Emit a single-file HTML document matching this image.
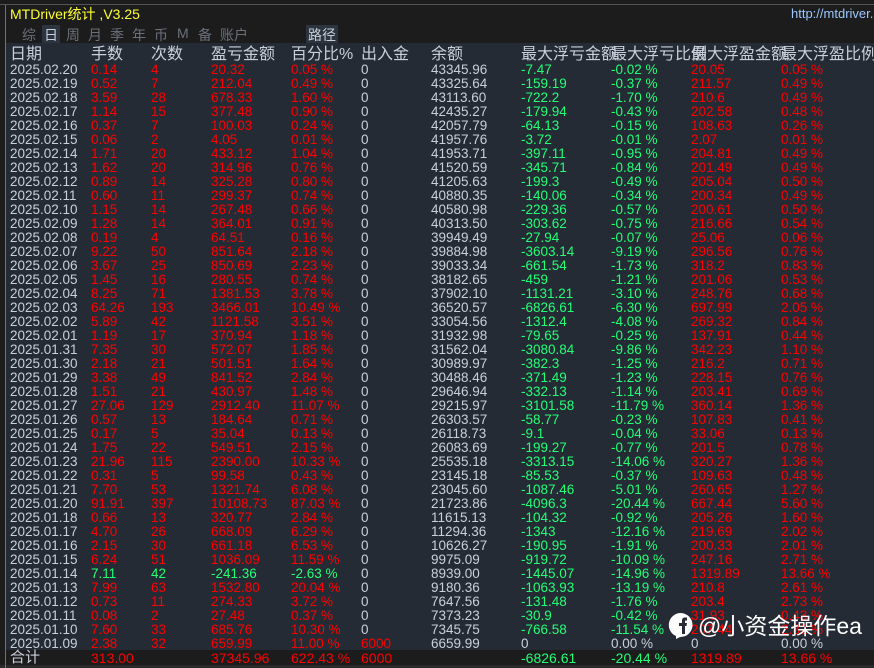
<!DOCTYPE html>
<html><head><meta charset="utf-8"><style>
*{margin:0;padding:0}
body{width:874px;height:668px;background:#1c1c1c;position:relative;overflow:hidden;font-family:"Liberation Sans","Noto Sans CJK SC",sans-serif;}
.ruler{position:absolute;left:0;top:0;width:874px;height:4px;background:#1c1c1c;border-bottom:1px solid #555}
.lb{position:absolute;left:5px;top:5px;width:1px;height:663px;background:#6a7380}
.title{position:absolute;left:10px;top:4px;color:#ffff33;font-size:14px}
.url{position:absolute;left:791px;top:6px;color:#9cc8ff;font-size:13px}
.tabs{position:absolute;left:22px;top:25px;color:#6a707a;font-size:14px}
.tabs span{position:absolute;top:0;white-space:nowrap}
.tabs .on{background:#2c3440;color:#c8d0dc;padding:0 2px;margin-left:-2px}
.lj{position:absolute;left:306px;top:25px;background:#2c3440;color:#c8d0dc;font-size:14px;padding:0 2px}
.tbl{position:absolute;left:6px;top:43px;width:868px;height:607px;background:#252b34}
.r{position:absolute;left:0;height:14px;line-height:14px;font-size:13.5px;color:#c8d0dc;white-space:nowrap;width:868px}
.r span{position:absolute}
.h{font-size:16px;line-height:18px;height:18px}
.s1{left:4px}.s2{left:85px}.s3{left:145px}.s4{left:205px}.s5{left:285px}.s6{left:355px}.s7{left:425px}.s8{left:515px}.s9{left:605px}.s10{left:685px}.s11{left:775px}
.R{color:#ff0000}.G{color:#22ff77}
.tot{position:absolute;left:6px;top:650px;width:868px;height:15px;background:#1c1c1c}
.bot{position:absolute;left:0;top:665px;width:874px;height:3px;background:#2a2a2a}
.wm{position:absolute;left:668px;top:612px;color:#fff;font-size:23px;line-height:28px;display:flex;align-items:center}
</style></head><body>
<div class="ruler"></div>
<div class="title">MTDriver统计 ,V3.25</div>
<div class="url">http://mtdriver.</div>
<div class="tabs"><span style="left:0">综</span><span class="on" style="left:22px">日</span><span style="left:44px">周</span><span style="left:66px">月</span><span style="left:88px">季</span><span style="left:110px">年</span><span style="left:132px">币</span><span style="left:155px">M</span><span style="left:176px">备</span><span style="left:198px">账户</span></div>
<div class="lj">路径</div>
<div class="tbl">
<div class="r h" style="top:3px"><span class="s1">日期</span><span class="s2">手数</span><span class="s3">次数</span><span class="s4">盈亏金额</span><span class="s5">百分比%</span><span class="s6">出入金</span><span class="s7">余额</span><span class="s8">最大浮亏金额</span><span class="s9">最大浮亏比例</span><span class="s10">最大浮盈金额</span><span class="s11">最大浮盈比例</span></div>
<div class="r" style="top:20px"><span class="s1">2025.02.20</span><span class="s2 R">0.14</span><span class="s3 R">4</span><span class="s4 R">20.32</span><span class="s5 R">0.05 %</span><span class="s6">0</span><span class="s7">43345.96</span><span class="s8 G">-7.47</span><span class="s9 G">-0.02 %</span><span class="s10 R">20.05</span><span class="s11 R">0.05 %</span></div>
<div class="r" style="top:34px"><span class="s1">2025.02.19</span><span class="s2 R">0.52</span><span class="s3 R">7</span><span class="s4 R">212.04</span><span class="s5 R">0.49 %</span><span class="s6">0</span><span class="s7">43325.64</span><span class="s8 G">-159.19</span><span class="s9 G">-0.37 %</span><span class="s10 R">211.57</span><span class="s11 R">0.49 %</span></div>
<div class="r" style="top:48px"><span class="s1">2025.02.18</span><span class="s2 R">3.59</span><span class="s3 R">28</span><span class="s4 R">678.33</span><span class="s5 R">1.60 %</span><span class="s6">0</span><span class="s7">43113.60</span><span class="s8 G">-722.2</span><span class="s9 G">-1.70 %</span><span class="s10 R">210.6</span><span class="s11 R">0.49 %</span></div>
<div class="r" style="top:62px"><span class="s1">2025.02.17</span><span class="s2 R">1.14</span><span class="s3 R">15</span><span class="s4 R">377.48</span><span class="s5 R">0.90 %</span><span class="s6">0</span><span class="s7">42435.27</span><span class="s8 G">-179.94</span><span class="s9 G">-0.43 %</span><span class="s10 R">202.58</span><span class="s11 R">0.48 %</span></div>
<div class="r" style="top:76px"><span class="s1">2025.02.16</span><span class="s2 R">0.37</span><span class="s3 R">7</span><span class="s4 R">100.03</span><span class="s5 R">0.24 %</span><span class="s6">0</span><span class="s7">42057.79</span><span class="s8 G">-64.13</span><span class="s9 G">-0.15 %</span><span class="s10 R">108.63</span><span class="s11 R">0.26 %</span></div>
<div class="r" style="top:90px"><span class="s1">2025.02.15</span><span class="s2 R">0.06</span><span class="s3 R">2</span><span class="s4 R">4.05</span><span class="s5 R">0.01 %</span><span class="s6">0</span><span class="s7">41957.76</span><span class="s8 G">-3.72</span><span class="s9 G">-0.01 %</span><span class="s10 R">2.07</span><span class="s11 R">0.01 %</span></div>
<div class="r" style="top:104px"><span class="s1">2025.02.14</span><span class="s2 R">1.71</span><span class="s3 R">20</span><span class="s4 R">433.12</span><span class="s5 R">1.04 %</span><span class="s6">0</span><span class="s7">41953.71</span><span class="s8 G">-397.11</span><span class="s9 G">-0.95 %</span><span class="s10 R">204.81</span><span class="s11 R">0.49 %</span></div>
<div class="r" style="top:118px"><span class="s1">2025.02.13</span><span class="s2 R">1.62</span><span class="s3 R">20</span><span class="s4 R">314.96</span><span class="s5 R">0.76 %</span><span class="s6">0</span><span class="s7">41520.59</span><span class="s8 G">-345.71</span><span class="s9 G">-0.84 %</span><span class="s10 R">201.49</span><span class="s11 R">0.49 %</span></div>
<div class="r" style="top:132px"><span class="s1">2025.02.12</span><span class="s2 R">0.89</span><span class="s3 R">14</span><span class="s4 R">325.28</span><span class="s5 R">0.80 %</span><span class="s6">0</span><span class="s7">41205.63</span><span class="s8 G">-199.3</span><span class="s9 G">-0.49 %</span><span class="s10 R">205.04</span><span class="s11 R">0.50 %</span></div>
<div class="r" style="top:146px"><span class="s1">2025.02.11</span><span class="s2 R">0.60</span><span class="s3 R">11</span><span class="s4 R">299.37</span><span class="s5 R">0.74 %</span><span class="s6">0</span><span class="s7">40880.35</span><span class="s8 G">-140.06</span><span class="s9 G">-0.34 %</span><span class="s10 R">200.34</span><span class="s11 R">0.49 %</span></div>
<div class="r" style="top:160px"><span class="s1">2025.02.10</span><span class="s2 R">1.15</span><span class="s3 R">14</span><span class="s4 R">267.48</span><span class="s5 R">0.66 %</span><span class="s6">0</span><span class="s7">40580.98</span><span class="s8 G">-229.36</span><span class="s9 G">-0.57 %</span><span class="s10 R">200.61</span><span class="s11 R">0.50 %</span></div>
<div class="r" style="top:174px"><span class="s1">2025.02.09</span><span class="s2 R">1.28</span><span class="s3 R">14</span><span class="s4 R">364.01</span><span class="s5 R">0.91 %</span><span class="s6">0</span><span class="s7">40313.50</span><span class="s8 G">-303.62</span><span class="s9 G">-0.75 %</span><span class="s10 R">216.66</span><span class="s11 R">0.54 %</span></div>
<div class="r" style="top:188px"><span class="s1">2025.02.08</span><span class="s2 R">0.19</span><span class="s3 R">4</span><span class="s4 R">64.51</span><span class="s5 R">0.16 %</span><span class="s6">0</span><span class="s7">39949.49</span><span class="s8 G">-27.94</span><span class="s9 G">-0.07 %</span><span class="s10 R">25.06</span><span class="s11 R">0.06 %</span></div>
<div class="r" style="top:202px"><span class="s1">2025.02.07</span><span class="s2 R">9.22</span><span class="s3 R">50</span><span class="s4 R">851.64</span><span class="s5 R">2.18 %</span><span class="s6">0</span><span class="s7">39884.98</span><span class="s8 G">-3603.14</span><span class="s9 G">-9.19 %</span><span class="s10 R">296.56</span><span class="s11 R">0.76 %</span></div>
<div class="r" style="top:216px"><span class="s1">2025.02.06</span><span class="s2 R">3.67</span><span class="s3 R">25</span><span class="s4 R">850.69</span><span class="s5 R">2.23 %</span><span class="s6">0</span><span class="s7">39033.34</span><span class="s8 G">-661.54</span><span class="s9 G">-1.73 %</span><span class="s10 R">318.2</span><span class="s11 R">0.83 %</span></div>
<div class="r" style="top:230px"><span class="s1">2025.02.05</span><span class="s2 R">1.45</span><span class="s3 R">16</span><span class="s4 R">280.55</span><span class="s5 R">0.74 %</span><span class="s6">0</span><span class="s7">38182.65</span><span class="s8 G">-459</span><span class="s9 G">-1.21 %</span><span class="s10 R">201.06</span><span class="s11 R">0.53 %</span></div>
<div class="r" style="top:244px"><span class="s1">2025.02.04</span><span class="s2 R">8.25</span><span class="s3 R">71</span><span class="s4 R">1381.53</span><span class="s5 R">3.78 %</span><span class="s6">0</span><span class="s7">37902.10</span><span class="s8 G">-1131.21</span><span class="s9 G">-3.10 %</span><span class="s10 R">248.76</span><span class="s11 R">0.68 %</span></div>
<div class="r" style="top:258px"><span class="s1">2025.02.03</span><span class="s2 R">64.26</span><span class="s3 R">193</span><span class="s4 R">3466.01</span><span class="s5 R">10.49 %</span><span class="s6">0</span><span class="s7">36520.57</span><span class="s8 G">-6826.61</span><span class="s9 G">-6.30 %</span><span class="s10 R">697.99</span><span class="s11 R">2.05 %</span></div>
<div class="r" style="top:272px"><span class="s1">2025.02.02</span><span class="s2 R">5.89</span><span class="s3 R">42</span><span class="s4 R">1121.58</span><span class="s5 R">3.51 %</span><span class="s6">0</span><span class="s7">33054.56</span><span class="s8 G">-1312.4</span><span class="s9 G">-4.08 %</span><span class="s10 R">269.32</span><span class="s11 R">0.84 %</span></div>
<div class="r" style="top:286px"><span class="s1">2025.02.01</span><span class="s2 R">1.19</span><span class="s3 R">17</span><span class="s4 R">370.94</span><span class="s5 R">1.18 %</span><span class="s6">0</span><span class="s7">31932.98</span><span class="s8 G">-79.65</span><span class="s9 G">-0.25 %</span><span class="s10 R">137.91</span><span class="s11 R">0.44 %</span></div>
<div class="r" style="top:300px"><span class="s1">2025.01.31</span><span class="s2 R">7.35</span><span class="s3 R">30</span><span class="s4 R">572.07</span><span class="s5 R">1.85 %</span><span class="s6">0</span><span class="s7">31562.04</span><span class="s8 G">-3080.84</span><span class="s9 G">-9.86 %</span><span class="s10 R">342.23</span><span class="s11 R">1.10 %</span></div>
<div class="r" style="top:314px"><span class="s1">2025.01.30</span><span class="s2 R">2.18</span><span class="s3 R">21</span><span class="s4 R">501.51</span><span class="s5 R">1.64 %</span><span class="s6">0</span><span class="s7">30989.97</span><span class="s8 G">-382.3</span><span class="s9 G">-1.25 %</span><span class="s10 R">216.2</span><span class="s11 R">0.71 %</span></div>
<div class="r" style="top:328px"><span class="s1">2025.01.29</span><span class="s2 R">3.38</span><span class="s3 R">49</span><span class="s4 R">841.52</span><span class="s5 R">2.84 %</span><span class="s6">0</span><span class="s7">30488.46</span><span class="s8 G">-371.49</span><span class="s9 G">-1.23 %</span><span class="s10 R">228.15</span><span class="s11 R">0.76 %</span></div>
<div class="r" style="top:342px"><span class="s1">2025.01.28</span><span class="s2 R">1.51</span><span class="s3 R">21</span><span class="s4 R">430.97</span><span class="s5 R">1.48 %</span><span class="s6">0</span><span class="s7">29646.94</span><span class="s8 G">-332.13</span><span class="s9 G">-1.14 %</span><span class="s10 R">203.41</span><span class="s11 R">0.69 %</span></div>
<div class="r" style="top:356px"><span class="s1">2025.01.27</span><span class="s2 R">27.06</span><span class="s3 R">129</span><span class="s4 R">2912.40</span><span class="s5 R">11.07 %</span><span class="s6">0</span><span class="s7">29215.97</span><span class="s8 G">-3101.58</span><span class="s9 G">-11.79 %</span><span class="s10 R">360.14</span><span class="s11 R">1.36 %</span></div>
<div class="r" style="top:370px"><span class="s1">2025.01.26</span><span class="s2 R">0.57</span><span class="s3 R">13</span><span class="s4 R">184.64</span><span class="s5 R">0.71 %</span><span class="s6">0</span><span class="s7">26303.57</span><span class="s8 G">-58.77</span><span class="s9 G">-0.23 %</span><span class="s10 R">107.83</span><span class="s11 R">0.41 %</span></div>
<div class="r" style="top:384px"><span class="s1">2025.01.25</span><span class="s2 R">0.17</span><span class="s3 R">5</span><span class="s4 R">35.04</span><span class="s5 R">0.13 %</span><span class="s6">0</span><span class="s7">26118.73</span><span class="s8 G">-9.1</span><span class="s9 G">-0.04 %</span><span class="s10 R">33.06</span><span class="s11 R">0.13 %</span></div>
<div class="r" style="top:398px"><span class="s1">2025.01.24</span><span class="s2 R">1.75</span><span class="s3 R">22</span><span class="s4 R">549.51</span><span class="s5 R">2.15 %</span><span class="s6">0</span><span class="s7">26083.69</span><span class="s8 G">-199.27</span><span class="s9 G">-0.77 %</span><span class="s10 R">201.5</span><span class="s11 R">0.78 %</span></div>
<div class="r" style="top:412px"><span class="s1">2025.01.23</span><span class="s2 R">21.96</span><span class="s3 R">115</span><span class="s4 R">2390.00</span><span class="s5 R">10.33 %</span><span class="s6">0</span><span class="s7">25535.18</span><span class="s8 G">-3313.15</span><span class="s9 G">-14.06 %</span><span class="s10 R">320.27</span><span class="s11 R">1.36 %</span></div>
<div class="r" style="top:426px"><span class="s1">2025.01.22</span><span class="s2 R">0.31</span><span class="s3 R">5</span><span class="s4 R">99.58</span><span class="s5 R">0.43 %</span><span class="s6">0</span><span class="s7">23145.18</span><span class="s8 G">-85.53</span><span class="s9 G">-0.37 %</span><span class="s10 R">109.63</span><span class="s11 R">0.48 %</span></div>
<div class="r" style="top:440px"><span class="s1">2025.01.21</span><span class="s2 R">7.70</span><span class="s3 R">53</span><span class="s4 R">1321.74</span><span class="s5 R">6.08 %</span><span class="s6">0</span><span class="s7">23045.60</span><span class="s8 G">-1087.46</span><span class="s9 G">-5.01 %</span><span class="s10 R">260.65</span><span class="s11 R">1.27 %</span></div>
<div class="r" style="top:454px"><span class="s1">2025.01.20</span><span class="s2 R">91.91</span><span class="s3 R">397</span><span class="s4 R">10108.73</span><span class="s5 R">87.03 %</span><span class="s6">0</span><span class="s7">21723.86</span><span class="s8 G">-4096.3</span><span class="s9 G">-20.44 %</span><span class="s10 R">667.44</span><span class="s11 R">5.60 %</span></div>
<div class="r" style="top:468px"><span class="s1">2025.01.18</span><span class="s2 R">0.66</span><span class="s3 R">13</span><span class="s4 R">320.77</span><span class="s5 R">2.84 %</span><span class="s6">0</span><span class="s7">11615.13</span><span class="s8 G">-104.32</span><span class="s9 G">-0.92 %</span><span class="s10 R">205.26</span><span class="s11 R">1.60 %</span></div>
<div class="r" style="top:482px"><span class="s1">2025.01.17</span><span class="s2 R">4.70</span><span class="s3 R">26</span><span class="s4 R">668.09</span><span class="s5 R">6.29 %</span><span class="s6">0</span><span class="s7">11294.36</span><span class="s8 G">-1343</span><span class="s9 G">-12.16 %</span><span class="s10 R">219.69</span><span class="s11 R">2.02 %</span></div>
<div class="r" style="top:496px"><span class="s1">2025.01.16</span><span class="s2 R">2.15</span><span class="s3 R">30</span><span class="s4 R">661.18</span><span class="s5 R">6.53 %</span><span class="s6">0</span><span class="s7">10626.27</span><span class="s8 G">-190.95</span><span class="s9 G">-1.91 %</span><span class="s10 R">200.33</span><span class="s11 R">2.01 %</span></div>
<div class="r" style="top:510px"><span class="s1">2025.01.15</span><span class="s2 R">6.24</span><span class="s3 R">51</span><span class="s4 R">1036.09</span><span class="s5 R">11.59 %</span><span class="s6">0</span><span class="s7">9975.09</span><span class="s8 G">-919.72</span><span class="s9 G">-10.09 %</span><span class="s10 R">247.16</span><span class="s11 R">2.71 %</span></div>
<div class="r" style="top:524px"><span class="s1">2025.01.14</span><span class="s2 G">7.11</span><span class="s3 G">42</span><span class="s4 G">-241.36</span><span class="s5 G">-2.63 %</span><span class="s6">0</span><span class="s7">8939.00</span><span class="s8 G">-1445.07</span><span class="s9 G">-14.96 %</span><span class="s10 R">1319.89</span><span class="s11 R">13.66 %</span></div>
<div class="r" style="top:538px"><span class="s1">2025.01.13</span><span class="s2 R">7.99</span><span class="s3 R">63</span><span class="s4 R">1532.80</span><span class="s5 R">20.04 %</span><span class="s6">0</span><span class="s7">9180.36</span><span class="s8 G">-1063.93</span><span class="s9 G">-13.19 %</span><span class="s10 R">210.8</span><span class="s11 R">2.61 %</span></div>
<div class="r" style="top:552px"><span class="s1">2025.01.12</span><span class="s2 R">0.73</span><span class="s3 R">11</span><span class="s4 R">274.33</span><span class="s5 R">3.72 %</span><span class="s6">0</span><span class="s7">7647.56</span><span class="s8 G">-131.48</span><span class="s9 G">-1.76 %</span><span class="s10 R">203.4</span><span class="s11 R">2.73 %</span></div>
<div class="r" style="top:566px"><span class="s1">2025.01.11</span><span class="s2 R">0.08</span><span class="s3 R">2</span><span class="s4 R">27.48</span><span class="s5 R">0.37 %</span><span class="s6">0</span><span class="s7">7373.23</span><span class="s8 G">-30.9</span><span class="s9 G">-0.42 %</span><span class="s10 R">31.93</span><span class="s11 R">0.43 %</span></div>
<div class="r" style="top:580px"><span class="s1">2025.01.10</span><span class="s2 R">7.60</span><span class="s3 R">33</span><span class="s4 R">685.76</span><span class="s5 R">10.30 %</span><span class="s6">0</span><span class="s7">7345.75</span><span class="s8 G">-766.58</span><span class="s9 G">-11.54 %</span><span class="s10 R">207.44</span><span class="s11 R">2.82 %</span></div>
<div class="r" style="top:594px"><span class="s1">2025.01.09</span><span class="s2 R">2.38</span><span class="s3 R">32</span><span class="s4 R">659.99</span><span class="s5 R">11.00 %</span><span class="s6 R">6000</span><span class="s7">6659.99</span><span class="s8">0</span><span class="s9">0.00 %</span><span class="s10">0</span><span class="s11">0.00 %</span></div>
</div>
<div class="tot"><div class="r" style="top:1px;font-size:14px"><span class="s1" style="font-size:15px">合计</span><span class="s2 R">313.00</span><span class="s4 R">37345.96</span><span class="s5 R">622.43 %</span><span class="s6 R">6000</span><span class="s8 G">-6826.61</span><span class="s9 G">-20.44 %</span><span class="s10 R">1319.89</span><span class="s11 R">13.66 %</span></div></div>
<div class="bot"></div>
<div class="lb"></div>
<div class="wm"><svg width="26" height="28" viewBox="0 0 26 28"><path d="M13 1A12 12 0 0 0 8 24L8 27 12 25A12 12 0 1 0 13 1Z" fill="#fff"/><path d="M14 22V14H11V11H14V8.5C14 6.5 15 5.5 17 5.5H19V8.5H17.5C17 8.5 17 9 17 9.5V11H19L18.5 14H17V22Z" fill="#252b34"/></svg><span style="margin-left:4px">@小资金操作ea</span></div>
</body></html>
